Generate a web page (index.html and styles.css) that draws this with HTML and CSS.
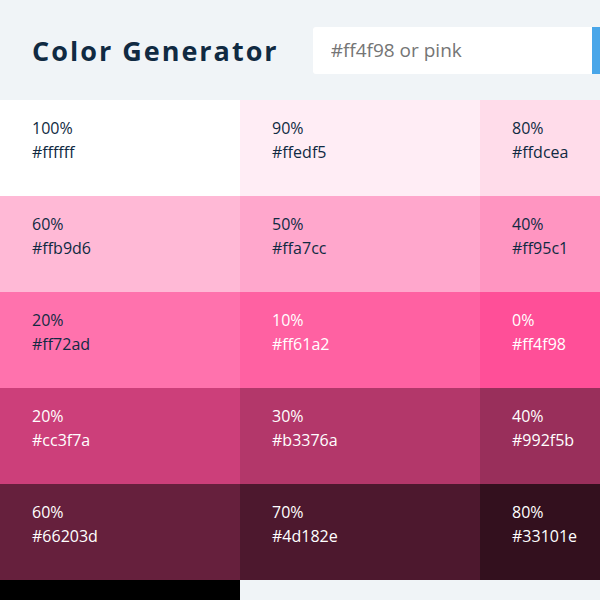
FILE: index.html
```html
<!DOCTYPE html>
<html lang="en">
<head>
<meta charset="utf-8">
<meta name="viewport" content="width=device-width, initial-scale=1">
<title>Color Generator</title>
<link rel="stylesheet" href="styles.css">
</head>
<body>
<header class="toolbar">
  <h1 class="title">Color Generator</h1>
  <form class="color-form">
    <input class="color-input" type="text" placeholder="#ff4f98 or pink" aria-label="Color">
    <button class="submit" type="button" aria-label="Generate"></button>
  </form>
</header>
<main class="colors">
  <article class="color" style="background:#ffffff"><p>100%</p><p>#ffffff</p></article>
  <article class="color" style="background:#ffedf5"><p>90%</p><p>#ffedf5</p></article>
  <article class="color" style="background:#ffdcea"><p>80%</p><p>#ffdcea</p></article>
  <article class="color" style="background:#ffb9d6"><p>60%</p><p>#ffb9d6</p></article>
  <article class="color" style="background:#ffa7cc"><p>50%</p><p>#ffa7cc</p></article>
  <article class="color" style="background:#ff95c1"><p>40%</p><p>#ff95c1</p></article>
  <article class="color" style="background:#ff72ad"><p>20%</p><p>#ff72ad</p></article>
  <article class="color color-light" style="background:#ff61a2"><p>10%</p><p>#ff61a2</p></article>
  <article class="color color-light" style="background:#ff4f98"><p>0%</p><p>#ff4f98</p></article>
  <article class="color color-light" style="background:#cc3f7a"><p>20%</p><p>#cc3f7a</p></article>
  <article class="color color-light" style="background:#b3376a"><p>30%</p><p>#b3376a</p></article>
  <article class="color color-light" style="background:#992f5b"><p>40%</p><p>#992f5b</p></article>
  <article class="color color-light" style="background:#66203d"><p>60%</p><p>#66203d</p></article>
  <article class="color color-light" style="background:#4d182e"><p>70%</p><p>#4d182e</p></article>
  <article class="color color-light" style="background:#33101e"><p>80%</p><p>#33101e</p></article>
  <article class="color" style="background:#000000"></article>
</main>
</body>
</html>
```
FILE: styles.css
```css
* {
  box-sizing: border-box;
  margin: 0;
}

html {
  overflow: hidden;
}

body {
  background: #f0f4f7;
  color: #102a42;
  font-family: "Open Sans", sans-serif;
  font-size: 16px;
  line-height: 24px;
}

.toolbar {
  display: flex;
  align-items: center;
  gap: 34px;
  min-height: 100px;
  padding-left: 32px;
}

.title {
  flex: none;
  font-size: 27px;
  line-height: 37px;
  letter-spacing: 2px;
}

.color-form {
  display: flex;
  flex: 1;
  min-width: 0;
}

.color-input {
  flex: 1;
  min-width: 0;
  padding: 8px 18px;
  border: 0;
  border-radius: 3px 0 0 3px;
  background: #fff;
  color: inherit;
  font-family: inherit;
  font-size: 19px;
  line-height: 31px;
}

.color-input::placeholder {
  color: #757575;
}

.submit {
  width: 8px;
  padding: 0;
  border: 0;
  background: #49a6e9;
}

.colors {
  display: grid;
  grid-template-columns: minmax(0, 2fr) minmax(0, 2fr) minmax(0, 1fr);
  grid-auto-rows: minmax(96px, auto);
}

.color {
  padding: 16px 0 16px 32px;
}

.color-light {
  color: #fff;
}
```
